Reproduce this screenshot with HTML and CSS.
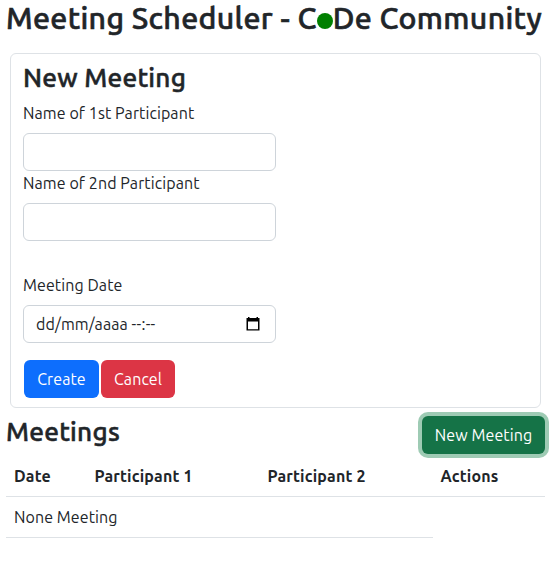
FILE: index.html
```html
<!DOCTYPE html>
<html lang="en">
<head>
<meta charset="utf-8">
<title>Meeting Scheduler</title>
<link rel="stylesheet" href="styles.css">
</head>
<body>
<h1 class="title">Meeting Scheduler - C<span class="dot"></span>De Community</h1>
<form class="card">
  <h2 class="heading">New Meeting</h2>
  <label class="label" for="p1">Name of 1st Participant</label>
  <input class="control" id="p1" type="text">
  <label class="label" for="p2">Name of 2nd Participant</label>
  <input class="control" id="p2" type="text">
  <span class="label label-date">Meeting Date</span>
  <div class="control date">
    <span>dd/mm/aaaa <span class="time">--:--</span></span>
    <svg class="calendar" width="16" height="16" viewBox="0 0 16 16"><path fill="#000" fill-rule="evenodd" d="M3 1h1.5v1h7V1H13v1h1.5v12.5h-13V2H3zM3 5.500v7.700h10V5.500z"/></svg>
  </div>
  <div class="actions">
    <button class="btn primary" type="button">Create</button>
    <button class="btn danger" type="button">Cancel</button>
  </div>
</form>
<div class="bar">
  <h2 class="heading">Meetings</h2>
  <button class="btn success" type="button">New Meeting</button>
</div>
<table class="table">
  <thead>
    <tr><th class="c1">Date</th><th class="c2">Participant 1</th><th class="c3">Participant 2</th><th>Actions</th></tr>
  </thead>
  <tbody>
    <tr><td colspan="3">None Meeting</td></tr>
  </tbody>
</table>
</body>
</html>
```
FILE: styles.css
```css
* { box-sizing: border-box; }
body {
  margin: 0;
  padding: 0 9px 0 6px;
  background: #fff;
  color: #212529;
  font: 16px/24px Ubuntu, "Noto Sans", sans-serif;
  letter-spacing: 0.09px;
  overflow: hidden;
}
.title {
  margin: 0 -9px 0 0;
  font-size: 30.3px;
  font-weight: 500;
  line-height: 37px;
  letter-spacing: 0.34px;
  white-space: nowrap;
  -webkit-text-stroke: 0.6px #212529;
}
.dot {
  display: inline-block;
  width: 16px;
  height: 16px;
  border-radius: 50%;
  background: green;
  vertical-align: 0;
}
.heading {
  margin: 0;
  font-size: 26.2px;
  font-weight: 500;
  line-height: 32px;
  letter-spacing: 0.24px;
  -webkit-text-stroke: 0.5px #212529;
}
.card {
  display: flex;
  flex-direction: column;
  align-items: flex-start;
  width: 531px;
  height: 355px;
  margin: 16px 0 0 4px;
  padding: 8px 12px;
  border: 1px solid #dee2e6;
  border-radius: 6px;
}
.label { margin: 7px 0 8px; }
.control + .label { margin-top: 0; }
.control + .label-date { margin-top: 32px; }
.control {
  width: 253px;
  height: 38px;
  padding: 6px 12px;
  border: 1px solid #ced4da;
  border-radius: 6px;
  background: #fff;
  font: inherit;
}
.date {
  display: flex;
  align-items: center;
  justify-content: space-between;
  padding-right: 14px;
}
.time { letter-spacing: 0.3px; }
.calendar { display: block; }
.actions { display: flex; gap: 2px; margin: 17px 0 0 1px; }
.btn {
  height: 38px;
  padding: 0;
  border: 0;
  border-radius: 6px;
  color: #fff;
  font: inherit;
  letter-spacing: 0.09px;
  text-align: center;
}
.primary { width: 75px; background: #0d6efd; }
.danger { width: 74px; background: #dc3545; }
.success { width: 123px; background: #157347; box-shadow: 0 0 0 4px #9ecbb4; }
.bar {
  display: flex;
  justify-content: space-between;
  align-items: flex-start;
  height: 48px;
  padding-top: 8px;
}
.table {
  width: 539px;
  border-spacing: 0;
  table-layout: fixed;
}
.table th, .table td {
  height: 41px;
  padding: 8px;
  border-bottom: 1px solid #dee2e6;
  text-align: left;
}
.table th { letter-spacing: 0.15px; }
.c1 { width: 80.500px; }
.c2, .c3 { width: 173px; }
```
